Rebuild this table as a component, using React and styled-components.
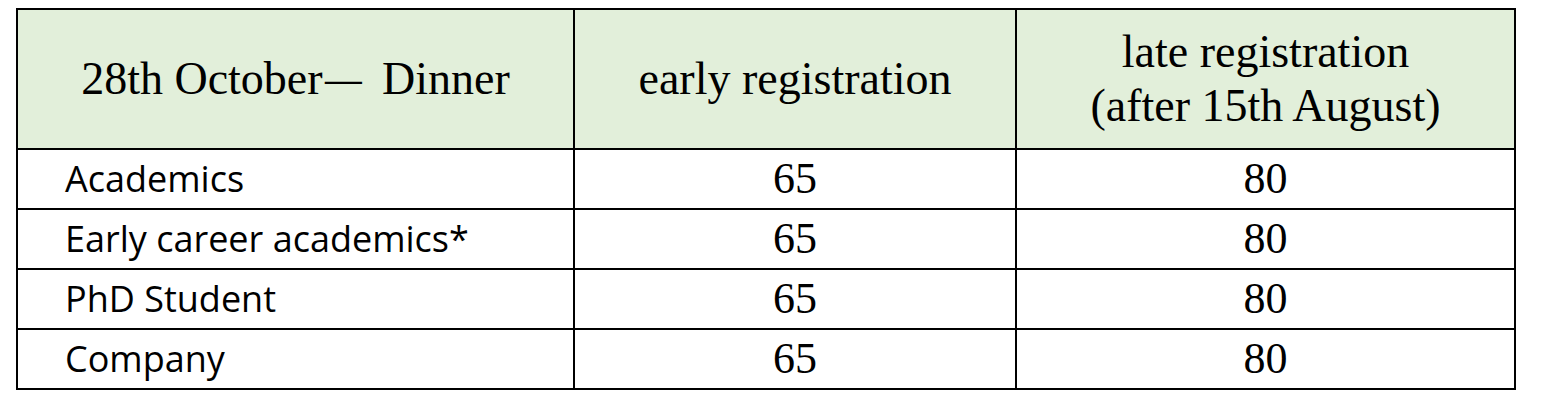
import React from "react";
import styled, { createGlobalStyle } from "styled-components";

const GlobalStyle = createGlobalStyle`
  body {
    margin: 0;
    background: #fff;
  }
`;

const rows = [
  { label: "Academics", early: 65, late: 80 },
  { label: "Early career academics*", early: 65, late: 80 },
  { label: "PhD Student", early: 65, late: 80 },
  { label: "Company", early: 65, late: 80 },
];

function App() {
  return (
    <>
      <GlobalStyle />
      <Page>
        <Table>
          <colgroup>
            <col style={{ width: "557px" }} />
            <col style={{ width: "442px" }} />
            <col style={{ width: "499px" }} />
          </colgroup>
          <thead>
            <tr>
              <HeadCell>
                28th October<Dash>—</Dash> Dinner
              </HeadCell>
              <HeadCell>early registration</HeadCell>
              <HeadCell>
                late registration
                <br />
                (after 15th August)
              </HeadCell>
            </tr>
          </thead>
          <tbody>
            {rows.map((r) => (
              <Row key={r.label}>
                <LabelCell>{r.label}</LabelCell>
                <PriceCell>{r.early}</PriceCell>
                <PriceCell>{r.late}</PriceCell>
              </Row>
            ))}
          </tbody>
        </Table>
      </Page>
    </>
  );
}

const Page = styled.div`
  padding: 8px 0 0 16px;
`;

const Table = styled.table`
  border-collapse: collapse;
  table-layout: fixed;
  width: 1498px;
  border: 2px solid #000;
  color: #000;
`;

const HeadCell = styled.th`
  height: 138px;
  padding: 0;
  background: #e2efda;
  border: 2px solid #000;
  font-family: "Liberation Serif", "Times New Roman", serif;
  font-weight: 400;
  font-size: 46px;
  line-height: 54px;
  text-align: center;
  vertical-align: middle;
`;

/* the dash in the source sits tight against "October" and is a bit short */
const Dash = styled.span`
  display: inline-block;
  margin: 0 0 0 2px;
  transform: scaleX(0.8);
  transform-origin: left center;
  width: 40px;
  margin-right: 6px;
`;

const Row = styled.tr`
  height: 60px;
`;

const LabelCell = styled.td`
  padding: 0 0 0 47px;
  border: 2px solid #000;
  font-family: "Open Sans", "Liberation Sans", sans-serif;
  font-size: 36px;
  line-height: 40px;
  white-space: nowrap;
  vertical-align: middle;
`;

const PriceCell = styled.td`
  padding: 0;
  border: 2px solid #000;
  font-family: "Liberation Serif", "Times New Roman", serif;
  font-size: 44px;
  line-height: 50px;
  text-align: center;
  vertical-align: middle;
`;

export default App;
